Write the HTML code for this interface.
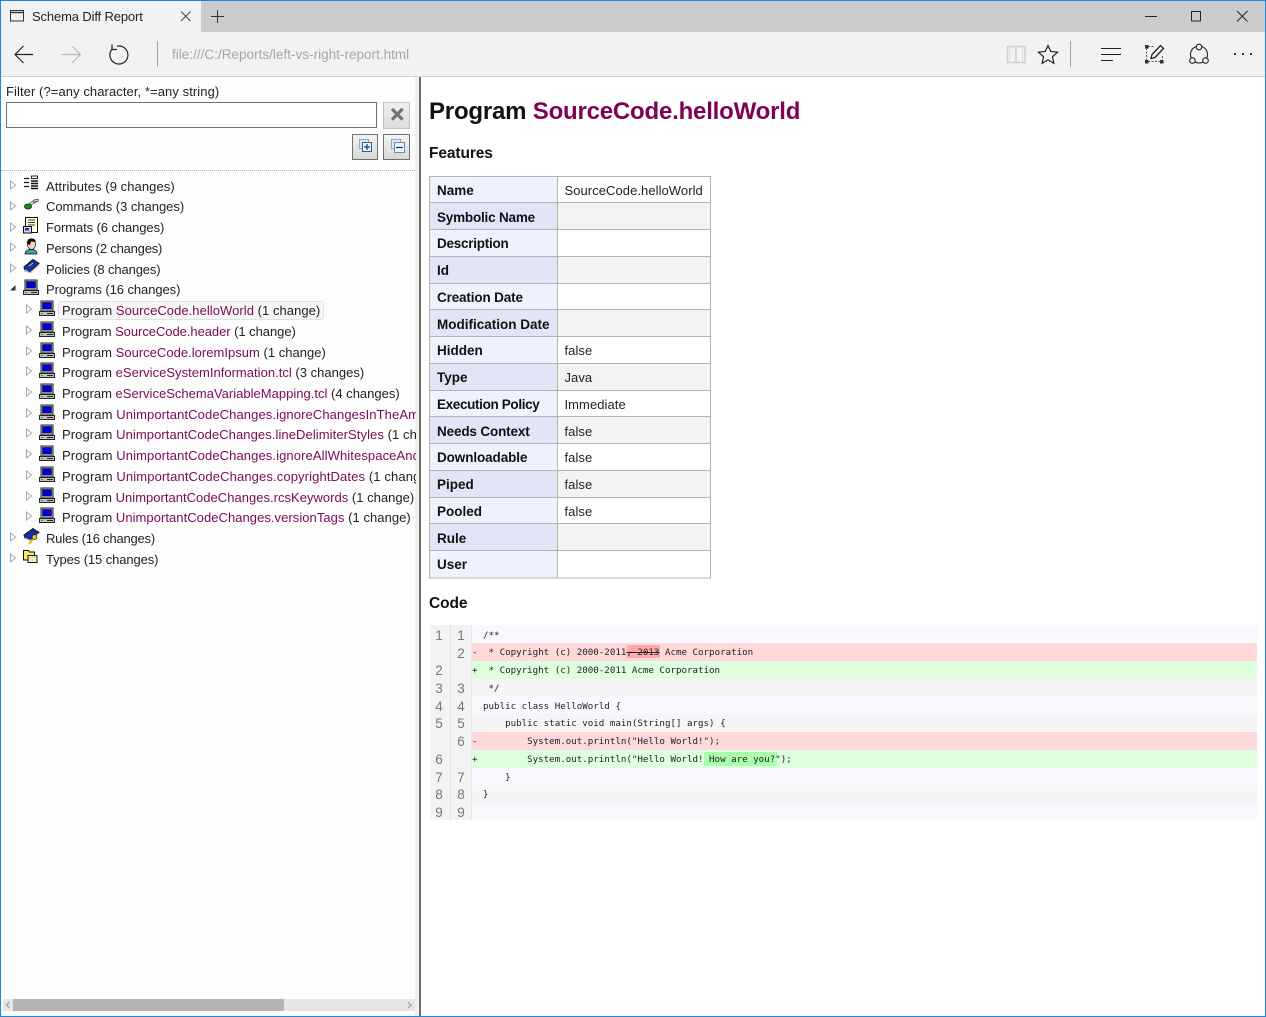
<!DOCTYPE html>
<html><head><meta charset="utf-8"><title>Schema Diff Report</title>
<style>
html,body{margin:0;padding:0;width:1266px;height:1017px;overflow:hidden;background:#fff;font-family:"Liberation Sans",sans-serif;color:#1a1a1a}
.a{position:absolute}
.t{position:absolute;white-space:nowrap;font-size:13px;line-height:18px;letter-spacing:.05px;color:#222}
.t b{font-weight:normal;color:#7a0a5a}
.tw{position:absolute;left:0;top:174px;width:416px;height:410px;overflow:hidden}
.n{position:absolute;font-weight:bold;font-size:13.5px;left:437px;white-space:nowrap;line-height:18px;color:#111}
.v{position:absolute;font-size:13px;left:564.500px;white-space:nowrap;line-height:18px;letter-spacing:.06px;color:#222}
.cr{position:absolute;left:472px;width:785px}
.g{position:absolute;font-size:13.5px;color:#777;line-height:18px;width:16px;text-align:center}
.c{position:absolute;font-family:"DejaVu Sans Mono","Liberation Mono",monospace;font-size:9.17px;line-height:18px;white-space:pre;color:#222}
</style></head><body>
<svg width="0" height="0" style="position:absolute">
<defs>
<symbol id="pc" viewBox="0 0 16 16"><rect x="2" y="1" width="12" height="10" fill="#c4c4c4" stroke="#222" stroke-width="1"/><rect x="3.500" y="2.500" width="9" height="6.500" fill="#0000e0" stroke="#111" stroke-width=".6"/><rect x="0.5" y="11.500" width="15" height="4" fill="#c0c0c0" stroke="#222"/><rect x="2" y="13" width="2" height="1" fill="#0c0"/><rect x="8" y="13" width="6" height="1" fill="#222"/></symbol>
<symbol id="tri" viewBox="0 0 8 10"><path d="M1.5 1 L6.5 5 L1.5 9 Z" fill="#fff" stroke="#a8a8a8"/></symbol>
</defs></svg>

<!-- window chrome -->
<div class="a" style="left:0;top:0;width:1266px;height:1017px;background:#fff"></div>
<div class="a" style="left:1px;top:1px;width:1264px;height:31px;background:#ccc"></div>
<div class="a" style="left:1px;top:1px;width:200px;height:31px;background:#f2f2f2"></div>
<div class="a" style="left:1px;top:32px;width:1264px;height:44px;background:#f2f2f2"></div>
<div class="a" style="left:1px;top:76px;width:1264px;height:1px;background:#cfcfcf"></div>

<svg class="a" style="left:0;top:0" width="1266" height="77" fill="none" stroke="#222" stroke-width="1">
<path d="M10.5 10.500h13v10.500h-13z" stroke="#333"/><path d="M10.5 12.500h13" stroke="#333" stroke-width="1.400"/>
<path d="M181 11.5l9.500 9.500M190.500 11.500l-9.500 9.500" stroke="#444"/>
<path d="M217.500 10v13M211 16.500h13" stroke="#333"/>
<path d="M15 54.500h18M23.500 46l-8.500 8.500 8.500 8.500" stroke-width="1.200"/>
<path d="M62 54.500h18M72 46l8.500 8.500-8.500 8.500" stroke="#b8b8b8" stroke-width="1.200"/>
<path d="M117 46.200A9 9 0 1 1 111.800 49.500" stroke-width="1.200"/><path d="M112 44.500v5h5" stroke-width="1.200"/>
<path d="M157.500 41v26" stroke="#a0a0a0"/>
<path d="M1007.500 46.500h8.500v16h-8.500zM1016 46.500h9v16h-9z" stroke="#d0d0d0" stroke-width="1.500"/><path d="M1010 48.500v12M1022.500 48.500v12" stroke="#dedede"/>
<path d="M1048 45.500l2.800 6 6.700 .7-5 4.500 1.400 6.600-5.900-3.400-5.900 3.400 1.400-6.600-5-4.500 6.700-.7z" stroke-width="1.200"/>
<path d="M1070.500 41v26" stroke="#a0a0a0"/>
<path d="M1101 48.500h20M1101 54.500h20M1101 60.500h12" stroke-width="1.100"/>
<path d="M1146.500 48v12M1162.500 56v4M1148 46.500h6M1148 61.500h13" stroke="#555" stroke-dasharray="2 1.500"/>
<rect x="1145" y="45" width="3.500" height="3.500" fill="#333" stroke="none"/><rect x="1145" y="60" width="3.500" height="3.500" fill="#333" stroke="none"/><rect x="1160" y="60" width="3.500" height="3.500" fill="#333" stroke="none"/>
<path d="M1151 58.500l1-4 8.500-9 3 3-8.500 9z" stroke-width="1.300"/>
<circle cx="1199" cy="54.500" r="8.500" stroke-width="1.100"/>
<circle cx="1199" cy="47" r="2.800" fill="#f2f2f2" stroke-width="1.100"/><circle cx="1192.500" cy="60.500" r="2.800" fill="#f2f2f2" stroke-width="1.100"/><circle cx="1205.500" cy="60.500" r="2.800" fill="#f2f2f2" stroke-width="1.100"/>
<rect x="1234" y="53" width="2" height="2" fill="#333" stroke="none"/><rect x="1242" y="53" width="2" height="2" fill="#333" stroke="none"/><rect x="1250" y="53" width="2" height="2" fill="#333" stroke="none"/>
<path d="M1145 16.500h12" stroke="#222"/>
<path d="M1191.500 11.500h9v9.500h-9z" stroke="#222"/>
<path d="M1237 11l10.500 10.500M1247.500 11l-10.500 10.500" stroke="#222"/>
</svg>
<div class="a" style="left:32px;top:8px;font-size:13px;line-height:18px;letter-spacing:-.14px;color:#222;white-space:nowrap">Schema Diff Report</div>
<div class="a" style="left:172px;top:46px;font-size:13.500px;line-height:18px;color:#a6a6a6;white-space:nowrap;letter-spacing:.02px">file:///C:/Reports/left-vs-right-report.html</div>

<!-- left pane -->
<div class="a" style="left:1px;top:77px;width:415px;height:939px;background:#fdfdfd"></div>
<div class="a" style="left:415px;top:77px;width:4px;height:939px;background:#f0f0f0"></div>
<div class="a" style="left:419px;top:77px;width:2px;height:939px;background:#6d6d6d"></div>

<div class="a" style="left:6px;top:83px;font-size:13px;line-height:18px;letter-spacing:.08px;color:#222;white-space:nowrap">Filter (?=any character, *=any string)</div>
<div class="a" style="left:6px;top:102px;width:369px;height:24px;border:1px solid #707070;background:#fff"></div>
<div class="a" style="left:383px;top:102px;width:25px;height:25px;border:1px solid #c4c4c4;background:linear-gradient(#f0f0f0,#dcdcdc)"></div>
<svg class="a" style="left:391px;top:108px" width="14" height="14"><path d="M2 2L10.500 10.500M10.500 2L2 10.500" stroke="#737373" stroke-width="3.200" stroke-linecap="square"/></svg>
<div class="a" style="left:352px;top:134px;width:24px;height:24px;border:1px solid #707070;background:linear-gradient(#f4f4f4,#d8d8d8)"></div>
<div class="a" style="left:383px;top:134px;width:25px;height:24px;border:1px solid #707070;background:linear-gradient(#f4f4f4,#d8d8d8)"></div>
<svg class="a" style="left:358px;top:138px" width="16" height="16"><rect x="1.500" y="1.500" width="9" height="9" fill="#dfe8f4" stroke="#8fa8c8"/><rect x="4.500" y="4.500" width="9" height="9" fill="#eef4fb" stroke="#2f6090"/><path d="M9 6v6M6 9h6" stroke="#003c78" stroke-width="1.200"/></svg>
<svg class="a" style="left:390px;top:138px" width="16" height="16"><rect x="1.500" y="1.500" width="9" height="9" fill="#dfe8f4" stroke="#8fa8c8"/><rect x="4.500" y="4.500" width="10" height="10" fill="#eef4fb" stroke="#6a88a8"/><path d="M6 9.500h7" stroke="#003c78" stroke-width="1.200"/></svg>
<div class="a" style="left:1px;top:170px;width:414px;height:0;border-top:1px dotted #b4b4b4"></div>

<!-- tree -->
<div class="a" style="left:58px;top:301px;width:264px;height:17px;background:#f6f6f6;border:1px solid #e0e0e0;border-radius:3px"></div>
<svg class="a" style="left:9px;top:176px" width="8" height="400">
<use href="#tri" x="0" y="4" width="8" height="10"/><use href="#tri" x="0" y="25" width="8" height="10"/><use href="#tri" x="0" y="46" width="8" height="10"/><use href="#tri" x="0" y="66" width="8" height="10"/><use href="#tri" x="0" y="87" width="8" height="10"/>
<path d="M6.500 109v5.500H1z" fill="#333"/>
<use href="#tri" x="0" y="356" width="8" height="10"/><use href="#tri" x="0" y="377" width="8" height="10"/>
</svg>
<svg class="a" style="left:25px;top:301px" width="8" height="230">
<use href="#tri" x="0" y="3" width="8" height="10"/><use href="#tri" x="0" y="24" width="8" height="10"/><use href="#tri" x="0" y="45" width="8" height="10"/><use href="#tri" x="0" y="65" width="8" height="10"/><use href="#tri" x="0" y="86" width="8" height="10"/><use href="#tri" x="0" y="107" width="8" height="10"/><use href="#tri" x="0" y="127" width="8" height="10"/><use href="#tri" x="0" y="148" width="8" height="10"/><use href="#tri" x="0" y="169" width="8" height="10"/><use href="#tri" x="0" y="190" width="8" height="10"/><use href="#tri" x="0" y="210" width="8" height="10"/>
</svg>

<svg class="a" style="left:23px;top:175px" width="18" height="17"><path d="M1 3.500h5M1 7.500h5M1 11.500h5" stroke="#111" stroke-width="1.200"/><rect x="8.500" y="1" width="6" height="2.500" fill="#fff" stroke="#111" stroke-width=".9"/><path d="M8 6h7M8 8.500h7M8 11h7M8 13.500h7" stroke="#111" stroke-width="1.400"/></svg>
<svg class="a" style="left:23px;top:197px" width="18" height="14"><path d="M6 7L12 2.500h4M7 9l4-3 5-2.500M10 5l4-1" stroke="#666" fill="none"/><ellipse cx="5" cy="9.500" rx="3.500" ry="2.500" fill="#0a9a0a" stroke="#111" stroke-width=".8"/></svg>
<svg class="a" style="left:23px;top:217px" width="16" height="17"><rect x="2.500" y=".5" width="12" height="15" fill="#fffde0" stroke="#111"/><path d="M5 3h7M5 5.500h7M5 8h7" stroke="#333"/><rect x=".5" y="9.500" width="8" height="6.500" fill="#d8d8d8" stroke="#111"/><rect x="2" y="11" width="4" height="2.500" fill="#2030c8"/></svg>
<svg class="a" style="left:24px;top:238px" width="15" height="17"><path d="M1 16c0-4 3-4.500 6-4.500s6 .5 6 4.500z" fill="#3aa0a8" stroke="#111" stroke-width=".7"/><ellipse cx="7.500" cy="6.500" rx="4" ry="5" fill="#f4d4b4" stroke="#111" stroke-width=".7"/><path d="M3 6c-.5-5 3-6 5.500-5.500s3.500 2 3 3.500L7 3.500 6 7z" fill="#111"/></svg>
<svg class="a" style="left:23px;top:259px" width="17" height="16"><path d="M1 8L10 .5l6 4-9 8.500-5-1z" fill="#1030a8" stroke="#111"/><path d="M1.500 11l5.500 3 9-8" stroke="#c8c8c8" fill="none" stroke-width="1.400"/><path d="M6 7l4-3" stroke="#e8d040"/></svg>
<svg class="a" style="left:23px;top:279px" width="16" height="16"><use href="#pc" width="16" height="16"/></svg>

<svg class="a" style="left:39px;top:300px" width="16" height="240">
<use href="#pc" y="0" width="16" height="16"/><use href="#pc" y="21" width="16" height="16"/><use href="#pc" y="42" width="16" height="16"/><use href="#pc" y="62" width="16" height="16"/><use href="#pc" y="83" width="16" height="16"/><use href="#pc" y="104" width="16" height="16"/><use href="#pc" y="124" width="16" height="16"/><use href="#pc" y="145" width="16" height="16"/><use href="#pc" y="166" width="16" height="16"/><use href="#pc" y="187" width="16" height="16"/><use href="#pc" y="207" width="16" height="16"/>
</svg>
<svg class="a" style="left:23px;top:528px" width="17" height="17"><path d="M1 7L10 .5l6 4-8 7-6-1z" fill="#1030a8" stroke="#111"/><path d="M1.500 10l6 2.500 8-7" stroke="#c8c8c8" fill="none"/><circle cx="11.500" cy="9" r="2.400" fill="#e8d020" stroke="#111" stroke-width=".7"/><path d="M10 11l-4 5" stroke="#d8b820" stroke-width="2"/></svg>
<svg class="a" style="left:23px;top:549px" width="16" height="15"><path d="M.5 1.500h5l1 1.500h5v8H.5z" fill="#ffe860" stroke="#111"/><path d="M5 6.500h9v7H5z" fill="#fff8b0" stroke="#111"/><path d="M7 8.500h5M7 11h5" stroke="#aaa" stroke-dasharray="1 1"/></svg>

<div class="tw">
<div class="t" style="left:46px;top:4px;letter-spacing:.07px">Attributes (9 changes)</div>
<div class="t" style="left:46px;top:24px;letter-spacing:-.03px">Commands (3 changes)</div>
<div class="t" style="left:46px;top:45px;letter-spacing:-.09px">Formats (6 changes)</div>
<div class="t" style="left:46px;top:66px;letter-spacing:-.2px">Persons (2 changes)</div>
<div class="t" style="left:46px;top:87px;letter-spacing:-.13px">Policies (8 changes)</div>
<div class="t" style="left:46px;top:107px;letter-spacing:-.07px">Programs (16 changes)</div>
<div class="t" style="left:62px;top:128px;letter-spacing:.05px">Program <b>SourceCode.helloWorld</b> (1 change)</div>
<div class="t" style="left:62px;top:149px;letter-spacing:-.05px">Program <b>SourceCode.header</b> (1 change)</div>
<div class="t" style="left:62px;top:170px;letter-spacing:.02px">Program <b>SourceCode.loremIpsum</b> (1 change)</div>
<div class="t" style="left:62px;top:190px;letter-spacing:.02px">Program <b>eServiceSystemInformation.tcl</b> (3 changes)</div>
<div class="t" style="left:62px;top:211px;letter-spacing:.01px">Program <b>eServiceSchemaVariableMapping.tcl</b> (4 changes)</div>
<div class="t" style="left:62px;top:232px;letter-spacing:.1px">Program <b>UnimportantCodeChanges.ignoreChangesInTheAmountOfWhitespace</b> (1 change)</div>
<div class="t" style="left:62px;top:252px;letter-spacing:.08px">Program <b>UnimportantCodeChanges.lineDelimiterStyles</b> (1 change)</div>
<div class="t" style="left:62px;top:273px;letter-spacing:.1px">Program <b>UnimportantCodeChanges.ignoreAllWhitespaceAndMore</b> (1 change)</div>
<div class="t" style="left:62px;top:294px;letter-spacing:.12px">Program <b>UnimportantCodeChanges.copyrightDates</b> (1 change)</div>
<div class="t" style="left:62px;top:315px;letter-spacing:.02px">Program <b>UnimportantCodeChanges.rcsKeywords</b> (1 change)</div>
<div class="t" style="left:62px;top:335px;letter-spacing:.05px">Program <b>UnimportantCodeChanges.versionTags</b> (1 change)</div>
<div class="t" style="left:46px;top:356px;letter-spacing:-.21px">Rules (16 changes)</div>
<div class="t" style="left:46px;top:377px;letter-spacing:-.1px">Types (15 changes)</div>
</div>

<!-- scrollbar -->
<div class="a" style="left:3px;top:999px;width:412px;height:12px;background:#e6e6e6"></div>
<div class="a" style="left:13px;top:999px;width:271px;height:12px;background:#b5b5b5"></div>
<svg class="a" style="left:3px;top:999px" width="412" height="12" fill="none" stroke="#a8a8a8" stroke-width="1.500"><path d="M6.500 3L3.500 6l3 3M405 3l3 3-3 3"/></svg>

<!-- right pane -->
<div class="a" style="left:429px;top:97px;font-size:24px;font-weight:bold;line-height:30px;letter-spacing:-.2px;color:#111;white-space:nowrap">Program <span style="color:#7f0055">SourceCode.helloWorld</span></div>
<div class="a" style="left:429px;top:144px;font-size:15.500px;font-weight:bold;line-height:20px;letter-spacing:-.1px;color:#111">Features</div>
<div class="a" style="left:429px;top:594px;font-size:15.500px;font-weight:bold;line-height:20px;letter-spacing:-.1px;color:#111">Code</div>

<!-- table -->
<div class="a" style="left:430px;top:177px;width:127px;height:27px;background:#eef1fe"></div>
<div class="a" style="left:430px;top:203px;width:127px;height:27px;background:#e1e5f5"></div><div class="a" style="left:558px;top:203px;width:152px;height:27px;background:#f3f3f3"></div>
<div class="a" style="left:430px;top:230px;width:127px;height:27px;background:#eef1fe"></div>
<div class="a" style="left:430px;top:257px;width:127px;height:27px;background:#e1e5f5"></div><div class="a" style="left:558px;top:257px;width:152px;height:27px;background:#f3f3f3"></div>
<div class="a" style="left:430px;top:284px;width:127px;height:26px;background:#eef1fe"></div>
<div class="a" style="left:430px;top:310px;width:127px;height:27px;background:#e1e5f5"></div><div class="a" style="left:558px;top:310px;width:152px;height:27px;background:#f3f3f3"></div>
<div class="a" style="left:430px;top:337px;width:127px;height:27px;background:#eef1fe"></div>
<div class="a" style="left:430px;top:364px;width:127px;height:27px;background:#e1e5f5"></div><div class="a" style="left:558px;top:364px;width:152px;height:27px;background:#f3f3f3"></div>
<div class="a" style="left:430px;top:391px;width:127px;height:26px;background:#eef1fe"></div>
<div class="a" style="left:430px;top:417px;width:127px;height:27px;background:#e1e5f5"></div><div class="a" style="left:558px;top:417px;width:152px;height:27px;background:#f3f3f3"></div>
<div class="a" style="left:430px;top:444px;width:127px;height:27px;background:#eef1fe"></div>
<div class="a" style="left:430px;top:471px;width:127px;height:27px;background:#e1e5f5"></div><div class="a" style="left:558px;top:471px;width:152px;height:27px;background:#f3f3f3"></div>
<div class="a" style="left:430px;top:498px;width:127px;height:26px;background:#eef1fe"></div>
<div class="a" style="left:430px;top:524px;width:127px;height:27px;background:#e1e5f5"></div><div class="a" style="left:558px;top:524px;width:152px;height:27px;background:#f3f3f3"></div>
<div class="a" style="left:430px;top:551px;width:127px;height:27px;background:#eef1fe"></div>
<svg class="a" style="left:429px;top:176px" width="283" height="403" stroke="#b4b4b4" fill="none"><path d="M.5 .5h281v401.500H.5zM128.500 0v402M0 26.500h282M0 53.500h282M0 80.500h282M0 107.500h282M0 133.500h282M0 160.500h282M0 187.500h282M0 214.500h282M0 240.500h282M0 267.500h282M0 294.500h282M0 321.500h282M0 347.500h282M0 374.500h282"/></svg>
<div class="n" style="top:182px">Name</div><div class="v" style="top:182px">SourceCode.helloWorld</div>
<div class="n" style="top:209px;letter-spacing:-.2px">Symbolic Name</div>
<div class="n" style="top:235px;letter-spacing:-.25px">Description</div>
<div class="n" style="top:262px">Id</div>
<div class="n" style="top:289px;letter-spacing:-.15px">Creation Date</div>
<div class="n" style="top:316px">Modification Date</div>
<div class="n" style="top:342px">Hidden</div><div class="v" style="top:342px">false</div>
<div class="n" style="top:369px">Type</div><div class="v" style="top:369px">Java</div>
<div class="n" style="top:396px;letter-spacing:-.35px">Execution Policy</div><div class="v" style="top:396px">Immediate</div>
<div class="n" style="top:423px;letter-spacing:-.15px">Needs Context</div><div class="v" style="top:423px">false</div>
<div class="n" style="top:449px;letter-spacing:-.1px">Downloadable</div><div class="v" style="top:449px">false</div>
<div class="n" style="top:476px">Piped</div><div class="v" style="top:476px">false</div>
<div class="n" style="top:503px">Pooled</div><div class="v" style="top:503px">false</div>
<div class="n" style="top:530px">Rule</div>
<div class="n" style="top:556px">User</div>

<!-- code -->
<div class="a" style="left:430px;top:625px;width:42px;height:195px;background:#f3f3f3"></div>
<div class="a" style="left:450px;top:625px;width:1px;height:195px;background:#e2e2e2"></div>
<div class="a" style="left:471px;top:625px;width:1px;height:195px;background:#e6e6e6"></div>
<div class="cr" style="top:625px;height:18px;background:#f8f8ff"></div>
<div class="cr" style="top:643px;height:18px;background:#ffd9d9"></div>
<div class="cr" style="top:661px;height:18px;background:#ddffdd"></div>
<div class="cr" style="top:679px;height:17px;background:#f5f5f5"></div>
<div class="cr" style="top:696px;height:18px;background:#f8f8ff"></div>
<div class="cr" style="top:714px;height:18px;background:#f5f5f5"></div>
<div class="cr" style="top:732px;height:18px;background:#ffd9d9"></div>
<div class="cr" style="top:750px;height:18px;background:#ddffdd"></div>
<div class="cr" style="top:768px;height:17px;background:#f8f8ff"></div>
<div class="cr" style="top:785px;height:18px;background:#f5f5f5"></div>
<div class="cr" style="top:803px;height:17px;background:#f8f8ff"></div>
<div class="a" style="left:627px;top:645px;width:33px;height:13px;background:#ffaaaa"></div>
<div class="a" style="left:704px;top:752px;width:73px;height:14px;background:#aaffaa"></div>

<div class="g" style="left:431px;top:627px">1</div><div class="g" style="left:453px;top:627px">1</div>
<div class="g" style="left:453px;top:645px">2</div>
<div class="g" style="left:431px;top:662px">2</div>
<div class="g" style="left:431px;top:680px">3</div><div class="g" style="left:453px;top:680px">3</div>
<div class="g" style="left:431px;top:698px">4</div><div class="g" style="left:453px;top:698px">4</div>
<div class="g" style="left:431px;top:715px">5</div><div class="g" style="left:453px;top:715px">5</div>
<div class="g" style="left:453px;top:733px">6</div>
<div class="g" style="left:431px;top:751px">6</div>
<div class="g" style="left:431px;top:769px">7</div><div class="g" style="left:453px;top:769px">7</div>
<div class="g" style="left:431px;top:786px">8</div><div class="g" style="left:453px;top:786px">8</div>
<div class="g" style="left:431px;top:804px">9</div><div class="g" style="left:453px;top:804px">9</div>

<div class="c" style="left:472px;top:627px">  /**</div>
<div class="c" style="left:472px;top:644px">-  * Copyright (c) 2000-2011<span style="text-decoration:line-through">, 2013</span> Acme Corporation</div>
<div class="c" style="left:472px;top:662px">+  * Copyright (c) 2000-2011 Acme Corporation</div>
<div class="c" style="left:472px;top:680px">   */</div>
<div class="c" style="left:472px;top:698px">  public class HelloWorld {</div>
<div class="c" style="left:472px;top:715px">      public static void main(String[] args) {</div>
<div class="c" style="left:472px;top:733px">-         System.out.println("Hello World!");</div>
<div class="c" style="left:472px;top:751px">+         System.out.println("Hello World! How are you?");</div>
<div class="c" style="left:472px;top:769px">      }</div>
<div class="c" style="left:472px;top:786px">  }</div>

<!-- window border -->
<div class="a" style="left:0;top:0;width:1264px;height:1015px;border:1px solid #1a88e0"></div>
</body></html>
